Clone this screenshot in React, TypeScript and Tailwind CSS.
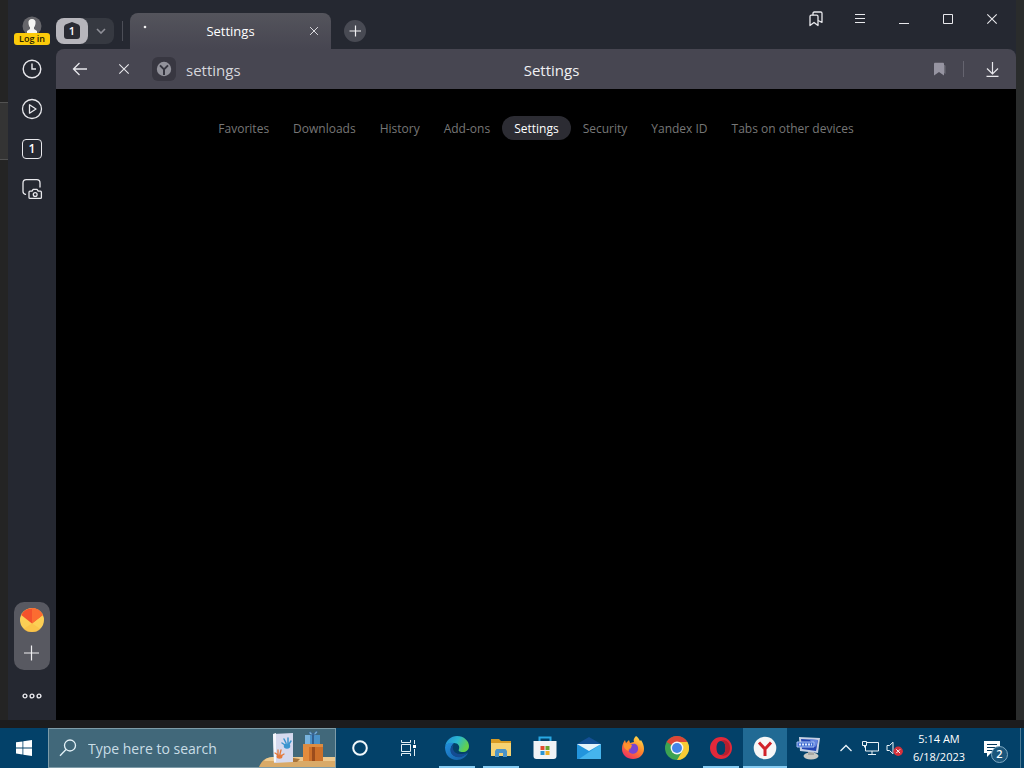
import { useState } from 'react';
import type { ReactNode } from 'react';

const PAGES = ['Favorites', 'Downloads', 'History', 'Add-ons', 'Settings', 'Security', 'Yandex ID', 'Tabs on other devices'];

function ClockIcon() {
  return (
    <svg width="20" height="20" viewBox="0 0 20 20" fill="none" stroke="#e8e8ec" strokeWidth="1.4">
      <circle cx="10" cy="10" r="8.8" />
      <path d="M10 4.5V10h4" />
    </svg>
  );
}

function PlayIcon() {
  return (
    <svg width="22" height="22" viewBox="0 0 22 22" fill="none" stroke="#e8e8ec" strokeWidth="1.3" strokeLinejoin="round">
      <circle cx="11" cy="11" r="9.5" />
      <path d="M8.5 6.8v8.4l6.5-4.2z" />
    </svg>
  );
}

function ScreenshotIcon() {
  return (
    <svg width="22" height="22" viewBox="0 0 22 22" fill="none" stroke="#e8e8ec" strokeWidth="1.3" strokeLinejoin="round" strokeLinecap="round">
      <path d="M4.5 16.4C3 16.1 2 15 2 13.5V5c0-2 1.2-3.3 3.3-3.3h10.5c2 0 3.2 1.3 3.2 3.3v4" />
      <path d="M9 13.2h2l1.200-1.900h3.800l1.200 1.900H19.400c.6 0 1 .4 1 1v5.200c0 .6-.4 1-1 1H9c-.6 0-1-.4-1-1v-5.200c0-.6.4-1 1-1z" />
      <circle cx="14.200" cy="16.500" r="1.900" />
    </svg>
  );
}

function CrossIcon() {
  return (
    <svg width="12" height="12" viewBox="0 0 12 12" fill="none" stroke="#e8e8ec" strokeWidth="1.1">
      <path d="M1.300 1.300l9.400 9.400M10.700 1.300l-9.400 9.400" />
    </svg>
  );
}

function YandexMark() {
  return (
    <svg width="16" height="16" viewBox="0 0 16 16">
      <circle cx="8" cy="8" r="7.2" fill="#92929b" />
      <path d="M4 4.4l4 4 4-4M8 8v6" fill="none" stroke="#35353f" strokeWidth="2" />
    </svg>
  );
}

function SearchArt() {
  return (
    <svg width="76" height="38" viewBox="0 0 76 38">
      <path d="M0 38c2-5 5-8 9-9h67v9z" fill="#d9aa68" />
      <path d="M5 32c2-3 5-4 8-4h63v4z" fill="#edc98f" />
      <path d="M34 29l7 1-3 3h-5z" fill="#a8743a" />
      <path d="M14 5l20-1v29l-19 1z" fill="#d5d9ee" />
      <path d="M14 5l3-1v29l-2 0z" fill="#f4f6fc" />
      <g stroke="#3b95cf" strokeWidth="1.5" strokeLinecap="round">
        <path d="M23 14l3 2M25 10l2 4M29 9v5M32 12l-2 3" />
        <ellipse cx="28" cy="17" rx="2.5" ry="2" fill="#3b95cf" />
      </g>
      <g stroke="#e5793a" strokeWidth="1.3" strokeLinecap="round">
        <path d="M16 24l3 2M19 21v4M22 21l-1 4M25 25l-3 2" />
        <ellipse cx="20.500" cy="27.500" rx="2.300" ry="1.600" fill="#e5793a" />
      </g>
      <path d="M46 6h15v12H46z" fill="#4a91c8" />
      <path d="M46 6h5v12h-5z" fill="#78b3de" />
      <path d="M53 4v14h2V4z" fill="#315f91" />
      <path d="M54 6c-5 0-5-4-2-3l2 3 3-4c3 0 1 4-3 4z" fill="#7fb4d8" stroke="#315f91" strokeWidth="0.7" />
      <path d="M44 16h20v16H44z" fill="#cc702a" />
      <path d="M44 16h6v16h-6z" fill="#e48c3d" />
      <path d="M53 16h3v16h-3z" fill="#9b4c1c" />
      <path d="M44 15h20v3H44z" fill="#dc8c42" />
    </svg>
  );
}

function EdgeIcon() {
  return (
    <svg width="26" height="26" viewBox="0 0 26 26">
      <defs>
        <linearGradient id="edgeTop" x1="0" y1="0" x2="1" y2="0.4">
          <stop offset="0" stopColor="#2189dc" />
          <stop offset="0.55" stopColor="#2ab8cf" />
          <stop offset="1" stopColor="#62d14c" />
        </linearGradient>
        <linearGradient id="edgeBottom" x1="0" y1="0" x2="1" y2="1">
          <stop offset="0" stopColor="#2290de" />
          <stop offset="1" stopColor="#145a9f" />
        </linearGradient>
      </defs>
      <path d="M1 12C2 5 7 1 13 1c7 0 12 5 12 10 0 4-3 6-6 6-4 0-5-1-4-3 1-3-1-6-5-6-5 0-8 1-9 4z" fill="url(#edgeTop)" />
      <path d="M1 12c1-4 5-5 9-4-3 2-5 8-1 12 3 3 10 2 15-2-2 4-6 7-11 7C6 25 1 20 1 12z" fill="url(#edgeBottom)" />
      <path d="M10 9c-3 4 0 10 6 10 3 0 5 0 8-2-3 4-7 6-11 5-7-1-9-9-3-13z" fill="#144b92" />
    </svg>
  );
}

function ExplorerIcon() {
  return (
    <svg width="22" height="20" viewBox="0 0 22 20">
      <path d="M1 1h8l2 2h10v15H1z" fill="#d79b24" />
      <path d="M1 5h20v13H1z" fill="#f5d272" />
      <path d="M5 19v-6l1.500-2h9l1.500 2v6h-4v-4H9v4z" fill="#4b94c8" />
    </svg>
  );
}

function StoreIcon() {
  return (
    <svg width="24" height="24" viewBox="0 0 24 24">
      <path d="M6.500 6V1.500h11V6" fill="none" stroke="#28a8e3" strokeWidth="2" />
      <path d="M.5 5h23v15c0 2-1 3-3 3h-17c-2 0-3-1-3-3z" fill="#f1f3f5" />
      <path d="M7.500 10h4v4h-4z" fill="#e24b2e" />
      <path d="M12.500 10h4v4h-4z" fill="#6aa52d" />
      <path d="M7.500 15h4v4h-4z" fill="#2a94d3" />
      <path d="M12.500 15h4v4h-4z" fill="#edaf28" />
    </svg>
  );
}

function MailIcon() {
  return (
    <svg width="24" height="24" viewBox="0 0 24 24">
      <path d="M0 8l12-7 12 7v4H0z" fill="#134f94" />
      <path d="M0 8h24v15H0z" fill="#2294dc" />
      <path d="M24 8v15H2z" fill="#45b4ed" />
      <path d="M0 8h24l-12 7z" fill="#e6f3fb" />
    </svg>
  );
}

function FirefoxIcon() {
  return (
    <svg width="24" height="24" viewBox="0 0 24 24">
      <defs>
        <linearGradient id="fox" x1="0.8" y1="0" x2="0.2" y2="1">
          <stop offset="0" stopColor="#ffe14d" />
          <stop offset="0.45" stopColor="#ff8a2a" />
          <stop offset="1" stopColor="#ee2865" />
        </linearGradient>
      </defs>
      <path d="M15 0c2 1 3 3 4 5l1-1c2 3 3 6 3 9 0 6-5 10-11 10S1 19 1 13c0-4 1-6 3-9l1 3 3-3 1 3 4-1c-1-2 0-4 2-6z" fill="url(#fox)" />
      <path d="M9 9c5-3 9 0 8 5-1 4-6 5-9 2-1-2 0-3 2-3-1-1-2-2-1-4z" fill="#7a45cf" />
      <path d="M3 7l4 1 4 1-1 3c-2 0-3 1-2 3-4-1-6-4-5-8z" fill="#ff922e" />
    </svg>
  );
}

function ChromeIcon() {
  return (
    <svg width="24" height="24" viewBox="0 0 24 24">
      <circle cx="12" cy="12" r="12" fill="#3ca352" />
      <path d="M12 12L1.600 6A12 12 0 0 1 22.400 6z" fill="#dc4637" />
      <path d="M12 6h10.400A12 12 0 0 1 12 24l6-10z" fill="#f9cb35" />
      <circle cx="12" cy="12" r="6.400" fill="#f5f5f5" />
      <circle cx="12" cy="12" r="5" fill="#4285e8" />
    </svg>
  );
}

function OperaIcon() {
  return (
    <svg width="24" height="24" viewBox="0 0 24 24">
      <path fillRule="evenodd" d="M12 1a11 11 0 1 0 0 22 11 11 0 0 0 0-22zm0 4c3 0 4.500 3 4.500 7s-1.500 7-4.500 7-4.500-3-4.500-7S9 5 12 5z" fill="#e2293a" />
      <path d="M12 5c3-2 9 0 9 7s-6 9-9 7c3 0 4.500-3 4.500-7S15 5 12 5z" fill="#b51f2e" />
    </svg>
  );
}

function YandexIcon() {
  return (
    <svg width="24" height="24" viewBox="0 0 24 24">
      <circle cx="12" cy="12" r="11.300" fill="#f7f7f7" />
      <path d="M6 6.500l6 6.500 6-6.500M12 12.500V20" fill="none" stroke="#d2232a" strokeWidth="3" />
    </svg>
  );
}

function RemoteIcon() {
  return (
    <svg width="26" height="26" viewBox="0 0 26 26">
      <ellipse cx="15" cy="21" rx="7.500" ry="3.500" fill="#c9c9c4" />
      <path d="M12 15h6v5h-6z" fill="#a8a8a4" />
      <path d="M3 2l21 1-2 15-18-2z" fill="#c6d0e4" />
      <path d="M5 4l17 1-2 11-14-2z" fill="#2446b4" />
      <path d="M13 4l9 1-2 7z" fill="#6585df" />
      <path d="M1 7h17v5H1z" fill="#3f6bd0" stroke="#a9c2f4" />
      <path d="M3 9.500h13" stroke="#dbe7ff" strokeWidth="2" strokeDasharray="2 1" />
    </svg>
  );
}

interface TaskApp {
  name: string;
  icon: ReactNode;
  state: 'closed' | 'open' | 'active';
}

const TASK_APPS: TaskApp[] = [
  { name: 'Edge', icon: <EdgeIcon />, state: 'open' },
  { name: 'Explorer', icon: <ExplorerIcon />, state: 'open' },
  { name: 'Store', icon: <StoreIcon />, state: 'closed' },
  { name: 'Mail', icon: <MailIcon />, state: 'closed' },
  { name: 'Firefox', icon: <FirefoxIcon />, state: 'closed' },
  { name: 'Chrome', icon: <ChromeIcon />, state: 'closed' },
  { name: 'Opera', icon: <OperaIcon />, state: 'open' },
  { name: 'Yandex', icon: <YandexIcon />, state: 'active' },
  { name: 'Remote', icon: <RemoteIcon />, state: 'closed' },
];

const APP_STATE = {
  closed: 'w-11 border-transparent',
  open: 'mx-1 w-9 border-[#86cbf2]',
  active: 'w-11 border-[#86cbf2] bg-[#216a94]',
};

function Sidebar() {
  return (
    <aside className="flex w-12 shrink-0 flex-col items-center bg-[#252831]">
      <button aria-label="Log in" className="flex h-[49px] w-full flex-col items-center pt-4">
        <svg width="20" height="17" viewBox="0 0 20 17">
          <circle cx="10" cy="10" r="9.500" fill="#66666b" />
          <path d="M10 3c2.500 0 4 1.500 3.500 4.500-.2 2-.8 3-1.500 3.800V13l3 2v2H5v-2l3-2v-1.700C7.200 10.500 6.700 9.500 6.500 7.500 6 4.500 7.500 3 10 3z" fill="#f6f6f4" />
        </svg>
        <span className="h-3 w-9 rounded-[3px] bg-[#fccb0a] text-center text-[9px] leading-3 font-semibold whitespace-nowrap text-[#2a2200]">Log in</span>
      </button>
      <button aria-label="History" className="flex h-10 w-full items-center justify-center"><ClockIcon /></button>
      <button aria-label="Media" className="flex h-10 w-full items-center justify-center"><PlayIcon /></button>
      <button aria-label="Tabs" className="flex h-10 w-full items-center justify-center">
        <span className="flex size-5 items-center justify-center rounded-[4px] border border-[#e8e8ec] text-xs font-semibold text-white">1</span>
      </button>
      <button aria-label="Screenshot" className="flex h-10 w-full items-center justify-center"><ScreenshotIcon /></button>

      <div className="mt-auto flex w-9 flex-col items-center gap-1.5 rounded-[10px] bg-[#585961] pt-1.5 pb-0.5">
        <button aria-label="Mail">
          <svg width="24" height="24" viewBox="0 0 24 24">
            <circle cx="12" cy="12" r="12" fill="#fccf55" />
            <path d="M1.200 7A12 12 0 0 1 22.800 7L12 15.500z" fill="#f4512c" />
            <path d="M12 0a12 12 0 0 1 10.800 7L12 15.500z" fill="#fb6c31" />
            <path d="M12 15.500l8.500 5.500A12 12 0 0 1 3.500 21z" fill="#f9b93f" opacity=".5" />
          </svg>
        </button>
        <button aria-label="Add" className="flex h-[30px] w-full items-center justify-center">
          <svg width="16" height="16" viewBox="0 0 16 16" stroke="#f0f0f2" strokeWidth="1.2">
            <path d="M7.500 .5v15M0 8h15" />
          </svg>
        </button>
      </div>
      <button aria-label="More" className="flex h-[50px] w-full items-center justify-center pt-0.5">
        <svg width="20" height="6" viewBox="0 0 20 6" fill="none" stroke="#e8e8ec" strokeWidth="1.4">
          <circle cx="3" cy="3" r="1.900" />
          <circle cx="10" cy="3" r="1.900" />
          <circle cx="17" cy="3" r="1.900" />
        </svg>
      </button>
    </aside>
  );
}

function TabStrip() {
  return (
    <div className="flex h-[49px] items-start bg-[#252831]">
      <div className="mt-[18px] flex h-[26px] w-[58px] shrink-0 rounded-lg bg-[#363941]">
        <button aria-label="Tab group" className="flex w-8 items-center justify-center rounded-lg bg-[#b7b6bc]">
          <svg width="20" height="20" viewBox="0 0 20 20">
            <path d="M10 1l6.500 2.500Q18 4.500 18 6v9q0 3-3 3H5q-3 0-3-3V6q0-1.500 1.500-2.500z" fill="#2a2b33" />
            <text x="10" y="14" textAnchor="middle" fontSize="11" fontWeight="600" fill="#fff">1</text>
          </svg>
        </button>
        <button aria-label="Show groups" className="flex flex-1 items-center justify-center">
          <svg width="10" height="6" viewBox="0 0 10 6" fill="none" stroke="#8f9098" strokeWidth="1.600">
            <path d="M1 1l4 4 4-4" />
          </svg>
        </button>
      </div>
      <div className="mt-[21px] ml-2 h-5 w-px bg-[#4c4e57]" />
      <div className="mt-[13px] ml-[7px] flex h-9 w-[201px] items-center rounded-t-lg bg-linear-to-b from-[#54545c] to-[#474651] px-3">
        <svg width="10" height="12" viewBox="0 0 10 12" className="shrink-0">
          <circle cx="3" cy="2" r="1.300" fill="#f2f2f2" />
        </svg>
        <span className="flex-1 pt-0.5 text-center text-[13px] text-white">Settings</span>
        <button aria-label="Close tab" className="flex w-2.5 shrink-0 justify-center"><CrossIcon /></button>
      </div>
      <button aria-label="New tab" className="mt-5 ml-[13px] flex size-[22px] items-center justify-center rounded-full bg-[#484a53]">
        <svg width="12" height="12" viewBox="0 0 12 12" stroke="#f0f0f2" strokeWidth="1.200">
          <path d="M6.500 .5v11M.5 6h12" />
        </svg>
      </button>

      <div className="mr-0.5 ml-auto flex h-[38px]">
        <button aria-label="Bookmarks" className="flex w-11 items-center justify-center">
          <svg width="14" height="16" viewBox="0 0 14 16" fill="none" stroke="#e8e8ec" strokeWidth="1.3" strokeLinejoin="round">
            <path d="M1 5.500c0-.8.5-1.300 1.300-1.300h5.400c.8 0 1.300.5 1.300 1.300V14.500l-4-3-4 3z" />
            <path d="M4 4.200V2.300C4 1.500 4.500 1 5.300 1h6.400c.8 0 1.300.5 1.300 1.300v9L9 9.500" />
          </svg>
        </button>
        <button aria-label="Menu" className="flex w-11 items-center justify-center">
          <svg width="12" height="12" viewBox="0 0 12 12" stroke="#e8e8ec">
            <path d="M1 1.500h10M1 5.500h10M1 9.500h10" />
          </svg>
        </button>
        <button aria-label="Minimize" className="flex w-11 items-center justify-center">
          <svg width="10" height="12" viewBox="0 0 10 12" stroke="#e8e8ec">
            <path d="M0 10.500h10" />
          </svg>
        </button>
        <button aria-label="Maximize" className="flex w-11 items-center justify-center">
          <svg width="10" height="10" viewBox="0 0 10 10" fill="none" stroke="#e8e8ec">
            <path d="M.5.5h9v9h-9z" />
          </svg>
        </button>
        <button aria-label="Close window" className="flex w-11 items-center justify-center"><CrossIcon /></button>
      </div>
    </div>
  );
}

function Toolbar() {
  const [address, setAddress] = useState('settings');

  return (
    <div className="bg-[#252831]">
      <div className="flex h-10 items-center rounded-t-lg bg-[#474651] px-0.5">
        <button aria-label="Back" className="flex h-10 w-11 items-center justify-center">
          <svg width="16" height="14" viewBox="0 0 16 14" fill="none" stroke="#e8e8ec" strokeWidth="1.3">
            <path d="M15 7H1.500M7.500 1l-6 6 6 6" />
          </svg>
        </button>
        <button aria-label="Stop" className="flex h-10 w-11 items-center justify-center"><CrossIcon /></button>
        <div className="grid flex-1 grid-cols-[1fr_auto_1fr] items-center px-1.5">
          <div className="flex min-w-0 items-center gap-2.5">
            <button aria-label="Site" className="flex size-6 shrink-0 items-center justify-center rounded-md bg-[#383741]"><YandexMark /></button>
            <input
              aria-label="Address"
              value={address}
              onChange={(e) => setAddress(e.target.value)}
              className="w-full min-w-0 bg-transparent pt-0.5 text-[15px] text-[#d6d6dc] outline-none"
            />
          </div>
          <span className="pt-0.5 text-[15px] text-[#f0f0f3]">Settings</span>
          <button aria-label="Bookmark page" className="mr-1 justify-self-end">
            <svg width="14" height="14" viewBox="0 0 14 14">
              <path d="M1 2c0-.8.400-1.200 1.200-1.200h7.600c.8 0 1.200.4 1.200 1.200v11.500l-5-3.500-5 3.500z" fill="#9694a1" />
              <path d="M11 3c1 0 1.500.5 1.500 1.200V12L11 11z" fill="#6d6c77" />
            </svg>
          </button>
        </div>
        <div className="mx-1.5 h-4 w-px bg-[#65646f]" />
        <button aria-label="Downloads" className="flex h-10 w-11 items-center justify-center">
          <svg width="14" height="16" viewBox="0 0 14 16" fill="none" stroke="#e8e8ec" strokeWidth="1.200">
            <path d="M7.500 1v11M2 7.500L7.500 13 13 7.500M1.500 15.400h12" />
          </svg>
        </button>
      </div>
    </div>
  );
}

function Taskbar() {
  const [query, setQuery] = useState('');

  return (
    <footer className="flex h-10 shrink-0 bg-[#034169]">
      <button aria-label="Start" className="flex w-12 shrink-0 items-center justify-center">
        <svg width="16" height="16" viewBox="0 0 16 16" fill="#fff">
          <path d="M0 2.300l6.500-.9v6.100H0zM7.300 1.300L16 0v7.500H7.300zM0 8.400h6.500v6.100L0 13.600zM7.300 8.400H16V16l-8.700-1.300z" />
        </svg>
      </button>
      <label className="flex w-72 shrink-0 items-center border border-[#7d9ba8] bg-[#41687a] pl-2.5">
        <svg width="18" height="18" viewBox="0 0 18 18" fill="none" stroke="#e4f2f8" strokeWidth="1.3" className="shrink-0">
          <circle cx="11" cy="6.500" r="5.500" />
          <path d="M7 10.500L1 16.800" />
        </svg>
        <input
          aria-label="Search"
          placeholder="Type here to search"
          value={query}
          onChange={(e) => setQuery(e.target.value)}
          className="ml-[11px] w-full min-w-0 bg-transparent pt-0.5 text-sm text-white outline-none placeholder:text-[#c9dde6]"
        />
        <span className="shrink-0"><SearchArt /></span>
      </label>
      <button aria-label="Cortana" className="flex w-12 items-center justify-center">
        <svg width="16" height="16" viewBox="0 0 16 16" fill="none" stroke="#f2f8fb" strokeWidth="2">
          <circle cx="8" cy="8" r="6.800" />
        </svg>
      </button>
      <button aria-label="Task view" className="flex w-12 items-center justify-center">
        <svg width="17" height="16" viewBox="0 0 17 16" fill="none" stroke="#e4f0f6">
          <path d="M1.500 4.500h9v7h-9zM1.500 0v2.500h9V0M1.500 16v-2.500h9V16M14.500 0v4M14.500 9v7" />
          <path d="M13 5h3v3h-3z" fill="#fff" stroke="none" />
        </svg>
      </button>
      <div className="ml-[3px] flex">
        {TASK_APPS.map((app) => (
          <button
            key={app.name}
            aria-label={app.name}
            className={`flex items-center justify-center border-b-2 pt-0.5 ${APP_STATE[app.state]}`}
          >
            {app.icon}
          </button>
        ))}
      </div>
      <div className="ml-auto flex items-center">
        <button aria-label="Hidden icons" className="flex w-6 justify-center">
          <svg width="12" height="8" viewBox="0 0 12 8" fill="none" stroke="#eaf3f8" strokeWidth="1.3">
            <path d="M.5 7L6 1.500 11.500 7" />
          </svg>
        </button>
        <button aria-label="Network" className="flex w-6 justify-center">
          <svg width="17" height="14" viewBox="0 0 17 14" fill="none" stroke="#eaf3f8">
            <path d="M5 1.500h11.500v8.500H3.500V5M10 10v3M6 13.500h8" />
            <path d="M.5.500h4v4h-4zM2.500 4.500v2" />
          </svg>
        </button>
        <button aria-label="Volume" className="flex w-6 justify-center">
          <svg width="17" height="15" viewBox="0 0 17 15" fill="none" stroke="#eaf3f8">
            <path d="M1 4.500h2.500L7 1.200v11.600L3.500 9.500H1z" />
            <circle cx="12.200" cy="10.200" r="4.700" fill="#d6303a" stroke="none" />
            <path d="M10.300 8.300l3.800 3.800M14.100 8.300l-3.800 3.800" stroke="#fff" />
          </svg>
        </button>
        <time className="flex w-[66px] flex-col items-center text-[11px] leading-[18px] text-white">
          <span>5:14 AM</span>
          <span>6/18/2023</span>
        </time>
        <button aria-label="Notifications" className="relative flex h-10 w-[48px] items-center justify-center pr-2">
          <svg width="18" height="17" viewBox="0 0 18 17">
            <path d="M1 1h16v12H8l-4 4v-4H1z" fill="#fff" />
            <path d="M4 4.500h10M4 7.500h10M4 10.500h6" stroke="#06395d" />
          </svg>
          <span className="absolute top-[18px] right-3 flex size-[17px] items-center justify-center rounded-full border border-[#7fa9c2] bg-[#1b567b] text-[11px] font-semibold text-white">2</span>
        </button>
        <div className="h-10 w-1 border-l border-[#4c7a94]" />
      </div>
    </footer>
  );
}

export default function App() {
  const [page, setPage] = useState('Settings');

  return (
    <div className="flex min-h-screen flex-col bg-[#1c1c1e] font-['Open_Sans','Noto_Sans',sans-serif]">
      <div className="flex flex-1 pb-2">
        {/* Desktop behind the window */}
        <div className="w-2 shrink-0 bg-[#242424] pt-[102px]">
          <div className="h-[58px] border-y border-[#525252] bg-[#343434]" />
        </div>
        <Sidebar />
        <main className="flex min-w-0 flex-1 flex-col">
          <TabStrip />
          <Toolbar />
          <section className="flex-1 bg-black pt-[27px]">
            <nav className="flex justify-center">
              {PAGES.map((name) => (
                <a
                  key={name}
                  href={`#${name}`}
                  onClick={() => setPage(name)}
                  className={`h-6 rounded-full px-3 pt-px text-xs leading-6 whitespace-nowrap ${
                    name === page ? 'bg-[#2c2c33] text-white' : 'text-[#777777]'
                  }`}
                >
                  {name}
                </a>
              ))}
            </nav>
          </section>
        </main>
        <div className="w-2 shrink-0 bg-[#2a2c2c]" />
      </div>
      <Taskbar />
    </div>
  );
}
